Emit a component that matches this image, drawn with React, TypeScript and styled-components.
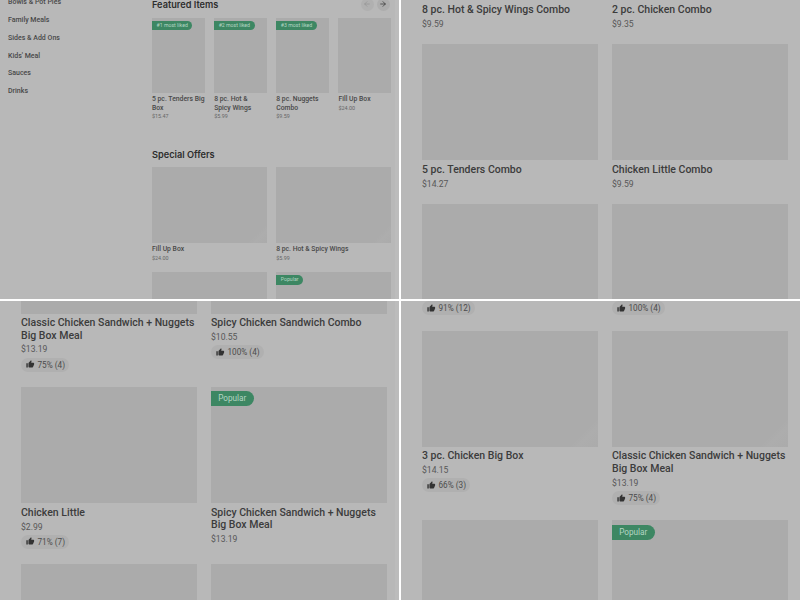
import React from "react";
import styled, { createGlobalStyle } from "styled-components";
import { ArrowLeft, ArrowRight } from "lucide-react";

const Global = createGlobalStyle`
  html, body { margin: 0; padding: 0; background: #fff; }
  body { font-family: "Roboto", "Liberation Sans", sans-serif; }
`;

const sheenFill = "linear-gradient(135deg, #ababab 0 90%, #adadad 93%, #ababab 100%)";

const Frame = styled.div`
  width: 800px;
  height: 600px;
  display: grid;
  grid-template-columns: 399px 399px;
  grid-template-rows: 299px 299px;
  column-gap: 2px;
  row-gap: 2px;
  background: #fff;
  overflow: hidden;
`;

const Panel = styled.section<{ $track?: boolean }>`
  position: relative;
  overflow: hidden;
  background: #b8b8b8;
  ${(p) => (p.$track ? "border-right: 4px solid #bcbcbc;" : "")}
`;

const Overview = styled.div`
  display: flex;
  height: 100%;
`;

const Sidebar = styled.nav`
  width: 152px;
  flex: none;
  box-sizing: border-box;
  padding: 0 0 0 8px;
  margin-top: -5.8px;
`;

const SideItem = styled.div`
  height: 17.8px;
  line-height: 17.8px;
  font-size: 7px;
  font-weight: 500;
  color: #484848;
`;

const Main = styled.main`
  width: 239px;
  flex: none;
  margin-top: -1.6px;
`;

const SectionHead = styled.div`
  display: flex;
  align-items: center;
  justify-content: space-between;
  height: 13px;
`;

const SectionTitle = styled.h2`
  margin: 0;
  font-family: "Inter", "Liberation Sans", sans-serif;
  font-size: 9.2px;
  line-height: 13px;
  font-weight: 600;
  color: #2e2e2e;
`;

const Arrows = styled.div`
  display: flex;
  gap: 3px;
  margin: -1px 1.5px 0 0;
`;

const ArrowButton = styled.span<{ $muted?: boolean }>`
  width: 13px;
  height: 13px;
  border-radius: 50%;
  display: flex;
  align-items: center;
  justify-content: center;
  background: ${(p) => (p.$muted ? "#b0b0b0" : "#adadad")};
  color: ${(p) => (p.$muted ? "#929292" : "#2a2a2a")};
`;

const FeaturedRow = styled.div`
  display: grid;
  grid-template-columns: repeat(4, 52.5px);
  column-gap: 9.67px;
  margin-top: 6.3px;
`;

const SmallImage = styled.div<{ $h: number; $sheen?: boolean }>`
  position: relative;
  height: ${(p) => p.$h}px;
  background: ${(p) => (p.$sheen ? sheenFill : "#ababab")};
`;

const SmallName = styled.div`
  margin-top: 2px;
  font-size: 6.8px;
  line-height: 8.3px;
  font-weight: 500;
  color: #484848;
  white-space: pre;
`;

const SmallPrice = styled.div`
  margin-top: 1.2px;
  font-size: 5.4px;
  line-height: 7px;
  color: #666;
`;

const OffersHead = styled(SectionHead)`
  margin-top: 28.3px;
`;

const OffersGrid = styled.div`
  display: grid;
  grid-template-columns: 114.5px 114.5px;
  column-gap: 9.7px;
  row-gap: 10px;
  margin-top: 6px;
`;

const MenuGrid = styled.div<{ $offset: number }>`
  display: grid;
  grid-template-columns: 175.5px 175.5px;
  column-gap: 14.5px;
  row-gap: 14.4px;
  padding-left: 21px;
  margin-top: ${(p) => p.$offset}px;
`;

const Card = styled.article`
  min-width: 0;
`;

const CardImage = styled.div<{ $sheen?: boolean }>`
  position: relative;
  height: 116px;
  background: ${(p) => (p.$sheen ? sheenFill : "#ababab")};
`;

const CardTitle = styled.div`
  margin-top: 3.6px;
  font-size: 10.5px;
  line-height: 12.5px;
  font-weight: 500;
  color: #3c3c3c;
`;

const CardPrice = styled.div`
  margin-top: 1.4px;
  font-size: 8.6px;
  line-height: 12px;
  color: #575757;
`;

const Rating = styled.div`
  display: flex;
  width: fit-content;
  align-items: center;
  gap: 3px;
  height: 14px;
  margin: 2.2px 0 1px;
  padding: 0 4px 0 5px;
  border-radius: 7px;
  background: #b0b0b0;
  font-size: 8.2px;
  color: #4c4c4c;
`;

const ThumbIcon = styled.svg`
  width: 8.5px;
  height: 8.5px;
  fill: #333;
  flex: none;
`;

const Badge = styled.span<{ $small?: boolean }>`
  position: absolute;
  left: 0;
  top: ${(p) => (p.$small ? 3.4 : 4.4)}px;
  height: ${(p) => (p.$small ? 9.4 : 15)}px;
  line-height: ${(p) => (p.$small ? 9.4 : 15)}px;
  padding: ${(p) => (p.$small ? "0 4.5px" : "0 7.2px")};
  background: #3d8763;
  color: #b4d6c4;
  font-size: ${(p) => (p.$small ? 5.2 : 8.2)}px;
  border-radius: ${(p) => (p.$small ? "0 5px 5px 0" : "0 8px 8px 0")};
  white-space: nowrap;
`;

type Item = { name: string; price: string; rating?: string; badge?: string; sheen?: boolean };

const sideItems = ["Bowls & Pot Pies", "Family Meals", "Sides & Add Ons", "Kids' Meal", "Sauces", "Drinks"];

const featured: Item[] = [
  { name: "5 pc. Tenders Big\nBox", price: "$15.47", badge: "#1 most liked" },
  { name: "8 pc. Hot &\nSpicy Wings", price: "$5.99", badge: "#2 most liked" },
  { name: "8 pc. Nuggets\nCombo", price: "$9.59", badge: "#3 most liked" },
  { name: "Fill Up Box", price: "$24.00" },
];

const offers: Item[] = [
  { name: "Fill Up Box", price: "$24.00", sheen: true },
  { name: "8 pc. Hot & Spicy Wings", price: "$5.99", sheen: true },
  { name: "", price: "" },
  { name: "", price: "", badge: "Popular" },
];

const topRight: Item[] = [
  { name: "8 pc. Hot & Spicy Wings Combo", price: "$9.59" },
  { name: "2 pc. Chicken Combo", price: "$9.35" },
  { name: "5 pc. Tenders Combo", price: "$14.27" },
  { name: "Chicken Little Combo", price: "$9.59" },
  { name: "", price: "" },
  { name: "", price: "" },
];

const bottomLeft: Item[] = [
  { name: "Classic Chicken Sandwich + Nuggets Big Box Meal", price: "$13.19", rating: "75% (4)" },
  { name: "Spicy Chicken Sandwich Combo", price: "$10.55", rating: "100% (4)" },
  { name: "Chicken Little", price: "$2.99", rating: "71% (7)" },
  { name: "Spicy Chicken Sandwich + Nuggets Big Box Meal", price: "$13.19", badge: "Popular" },
  { name: "", price: "" },
  { name: "", price: "" },
];

const bottomRight: Item[] = [
  { name: "", price: "", rating: "91% (12)" },
  { name: "", price: "", rating: "100% (4)" },
  { name: "3 pc. Chicken Big Box", price: "$14.15", rating: "66% (3)", sheen: true },
  { name: "Classic Chicken Sandwich + Nuggets Big Box Meal", price: "$13.19", rating: "75% (4)", sheen: true },
  { name: "", price: "" },
  { name: "", price: "", badge: "Popular" },
];

function Thumb() {
  return (
    <ThumbIcon viewBox="0 0 24 24">
      <path d="M1 21h4V9H1v12zm22-11c0-1.1-.9-2-2-2h-6.31l.95-4.57.03-.32c0-.41-.17-.79-.44-1.06L14.17 1 7.59 7.59C7.22 7.95 7 8.45 7 9v10c0 1.1.9 2 2 2h9c.83 0 1.54-.5 1.8-1.22l3.02-7.05c.08-.23.13-.47.13-.73v-2z" />
    </ThumbIcon>
  );
}

function MenuCard({ item }: { item: Item }) {
  return (
    <Card>
      <CardImage $sheen={item.sheen}>{item.badge && <Badge>{item.badge}</Badge>}</CardImage>
      {item.name && <CardTitle>{item.name}</CardTitle>}
      {item.price && <CardPrice>{item.price}</CardPrice>}
      {item.rating && (
        <Rating>
          <Thumb />
          {item.rating}
        </Rating>
      )}
    </Card>
  );
}

function SmallCard({ item, height }: { item: Item; height: number }) {
  return (
    <Card>
      <SmallImage $h={height} $sheen={item.sheen}>
        {item.badge && <Badge $small>{item.badge}</Badge>}
      </SmallImage>
      {item.name && <SmallName>{item.name}</SmallName>}
      {item.price && <SmallPrice>{item.price}</SmallPrice>}
    </Card>
  );
}

export default function App() {
  return (
    <>
      <Global />
      <Frame>
        <Panel $track>
          <Overview>
            <Sidebar>
              {sideItems.map((s) => (
                <SideItem key={s}>{s}</SideItem>
              ))}
            </Sidebar>
            <Main>
              <SectionHead>
                <SectionTitle>Featured Items</SectionTitle>
                <Arrows>
                  <ArrowButton $muted>
                    <ArrowLeft size={8} strokeWidth={2} />
                  </ArrowButton>
                  <ArrowButton>
                    <ArrowRight size={8} strokeWidth={2} />
                  </ArrowButton>
                </Arrows>
              </SectionHead>
              <FeaturedRow>
                {featured.map((f) => (
                  <SmallCard key={f.name} item={f} height={75.6} />
                ))}
              </FeaturedRow>
              <OffersHead>
                <SectionTitle>Special Offers</SectionTitle>
              </OffersHead>
              <OffersGrid>
                {offers.map((f, i) => (
                  <SmallCard key={i} item={f} height={76} />
                ))}
              </OffersGrid>
            </Main>
          </Overview>
        </Panel>
        <Panel>
          <MenuGrid $offset={-115.7}>
            {topRight.map((m, i) => (
              <MenuCard key={i} item={m} />
            ))}
          </MenuGrid>
        </Panel>
        <Panel $track>
          <MenuGrid $offset={-103.5}>
            {bottomLeft.map((m, i) => (
              <MenuCard key={i} item={m} />
            ))}
          </MenuGrid>
        </Panel>
        <Panel>
          <MenuGrid $offset={-118}>
            {bottomRight.map((m, i) => (
              <MenuCard key={i} item={m} />
            ))}
          </MenuGrid>
        </Panel>
      </Frame>
    </>
  );
}
